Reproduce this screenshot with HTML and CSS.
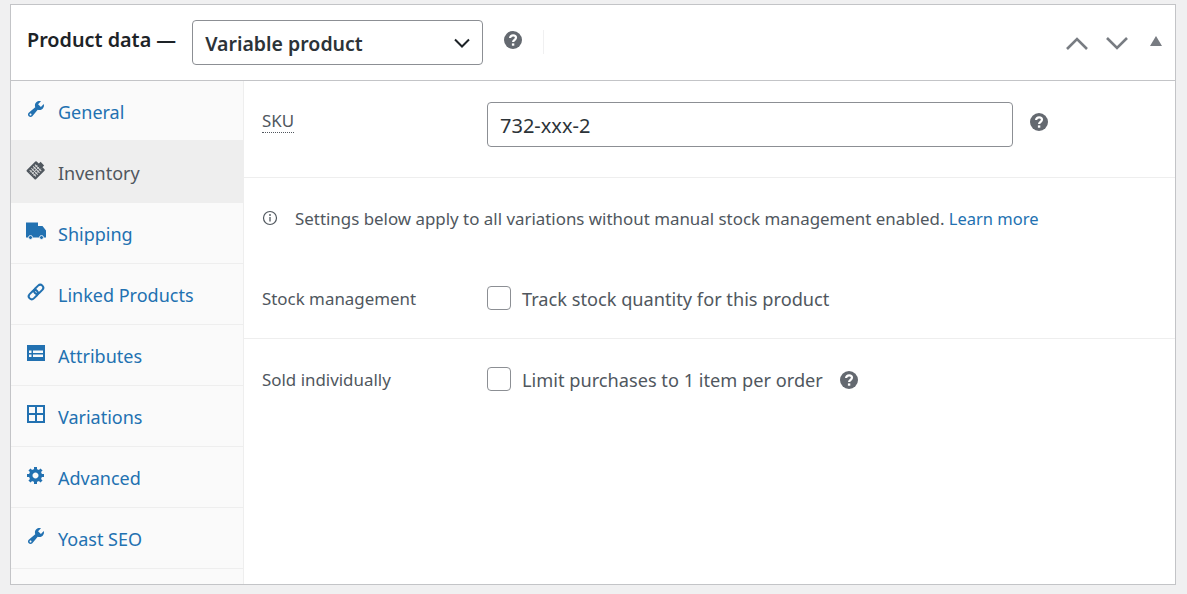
FILE: index.html
```html
<!DOCTYPE html>
<html lang="en">
<head>
    <meta charset="UTF-8">
    <title>Product data</title>
    <link rel="stylesheet" href="styles.css">
</head>
<body>

    <div class="postbox">
        <div class="postbox-header">
            <span class="postbox-title">Product data —</span>
            <div class="type-select">
                <span class="type-value">Variable product</span>
                <svg class="select-arrow" viewBox="0 0 16 10"><path d="M1 1.500l7 7 7-7" fill="none" stroke="#1d2327" stroke-width="2"/></svg>
            </div>
            <svg class="help help-header" viewBox="0 0 18 18"><use href="#help-icon"/></svg>
            <span class="header-sep"></span>
            <div class="handle-actions">
                <svg class="handle" viewBox="0 0 22 13"><path d="M1 12l10-10 10 10" fill="none" stroke="#787c82" stroke-width="2.600"/></svg>
                <svg class="handle handle-down" viewBox="0 0 22 13"><path d="M1 1l10 10 10-10" fill="none" stroke="#787c82" stroke-width="2.600"/></svg>
                <svg class="handle-toggle" viewBox="0 0 12 10"><path d="M6 0l6 10H0z" fill="#787c82"/></svg>
            </div>
        </div>

        <div class="panel-wrap">
            <ul class="tabs">
                <li class="tab">
                    <svg class="tab-icon" viewBox="0 0 20 20"><use href="#wrench-icon"/></svg>
                    General
                </li>
                <li class="tab active">
                    <svg class="tab-icon" viewBox="0 0 20 20">
                        <g transform="rotate(45 10 10)">
                            <rect x="3.500" y="3.500" width="13" height="14" rx="1" fill="#50575e"/>
                            <rect x="7.500" y="1" width="5" height="3.500" fill="#50575e"/>
                            <path d="M5.500 7h9M5.500 9.500h9M5.500 12h9M5.500 14.500h9" stroke="#ddd" stroke-width="1"/>
                            <path d="M7.500 5.500v10.500M10 5.500v10.500M12.500 5.500v10.500" stroke="#ddd" stroke-width=".7"/>
                        </g>
                    </svg>
                    Inventory
                </li>
                <li class="tab">
                    <svg class="tab-icon" viewBox="0 0 20 20">
                        <path d="M0 1.500h12v3.500h4.500l3.500 4.500v7H0z" fill="#2271b1"/>
                        <circle cx="4.500" cy="16.500" r="2" fill="#2271b1" stroke="#fafafa" stroke-width=".8"/>
                        <circle cx="15.500" cy="16.500" r="2" fill="#2271b1" stroke="#fafafa" stroke-width=".8"/>
                    </svg>
                    Shipping
                </li>
                <li class="tab">
                    <svg class="tab-icon" viewBox="0 0 20 20">
                        <g transform="rotate(-45 10 10)" fill="none" stroke="#2271b1" stroke-width="2">
                            <rect x="1" y="7" width="10.500" height="6" rx="3"/>
                            <rect x="8.500" y="7" width="10.500" height="6" rx="3"/>
                        </g>
                    </svg>
                    Linked Products
                </li>
                <li class="tab">
                    <svg class="tab-icon" viewBox="0 0 20 20">
                        <path fill-rule="evenodd" d="M1 2h18v16H1zM3 7.500v2.500h2.500V7.500zM7 7.500v2.500h10V7.500zM3 11.500v2.500h2.500v-2.500zM7 11.500v2.500h10v-2.500z" fill="#2271b1"/>
                    </svg>
                    Attributes
                </li>
                <li class="tab">
                    <svg class="tab-icon" viewBox="0 0 20 20">
                        <path d="M2 2h16v16H2zM10 2v16M2 10h16" fill="none" stroke="#2271b1" stroke-width="2"/>
                    </svg>
                    Variations
                </li>
                <li class="tab">
                    <svg class="tab-icon" viewBox="0 0 20 20"><path fill="#2271b1" d="M18 12h-2.180c-.170.700-.440 1.350-.810 1.930l1.540 1.540-2.100 2.100-1.540-1.540c-.580.360-1.230.630-1.910.790V19H8v-2.180c-.680-.160-1.330-.430-1.910-.790l-1.540 1.540-2.120-2.120 1.540-1.540c-.360-.580-.630-1.230-.790-1.910H1V9.030h2.170c.160-.700.440-1.350.800-1.940L2.430 5.550l2.100-2.100 1.540 1.540c.580-.370 1.240-.640 1.930-.810V2h3v2.180c.680.160 1.330.430 1.910.790l1.540-1.540 2.120 2.120-1.540 1.540c.360.590.640 1.240.800 1.940H18V12zm-8.500 1.500c1.660 0 3-1.340 3-3s-1.340-3-3-3-3 1.340-3 3 1.340 3 3 3z"/></svg>
                    Advanced
                </li>
                <li class="tab">
                    <svg class="tab-icon" viewBox="0 0 20 20"><use href="#wrench-icon"/></svg>
                    Yoast SEO
                </li>
            </ul>

            <div class="panel">
                <div class="field sku-field">
                    <label class="field-label"><span class="tip">SKU</span></label>
                    <div class="text-input">732-xxx-2</div>
                    <svg class="help help-sku" viewBox="0 0 18 18"><use href="#help-icon"/></svg>
                </div>

                <p class="notice">
                    <svg class="notice-icon" viewBox="0 0 16 16">
                        <circle cx="8" cy="8" r="6.500" fill="none" stroke="#50575e" stroke-width="1.200"/>
                        <path d="M8 7v4.500" stroke="#50575e" stroke-width="1.300"/>
                        <circle cx="8" cy="5" r=".9" fill="#50575e"/>
                    </svg>
                    <span>Settings below apply to all variations without manual stock management enabled. <a href="#">Learn more</a></span>
                </p>

                <div class="field stock-field">
                    <label class="field-label">Stock management</label>
                    <span class="checkbox"></span>
                    <span class="check-text">Track stock quantity for this product</span>
                </div>

                <div class="field sold-field">
                    <label class="field-label">Sold individually</label>
                    <span class="checkbox"></span>
                    <span class="check-text">Limit purchases to 1 item per order</span>
                    <svg class="help help-sold" viewBox="0 0 18 18"><use href="#help-icon"/></svg>
                </div>
            </div>
        </div>
    </div>

    <svg class="icon-defs" width="0" height="0">
        <defs>
            <g id="help-icon">
                <circle cx="9" cy="9" r="9" fill="#646970"/>
                <path d="M6.100 7c0-1.700 1.300-2.700 3-2.700s2.900 1 2.900 2.500c0 2.200-2.900 2.200-2.900 4.200" fill="none" stroke="#fff" stroke-width="2.200"/>
                <rect x="7.900" y="12.400" width="2.400" height="2.300" fill="#fff"/>
            </g>
            <path id="wrench-icon" fill="#2271b1" d="M16.680 9.770c-1.340 1.340-3.300 1.670-4.950.990l-5.410 6.520c-.990.990-2.590.990-3.580 0s-.990-2.590 0-3.570l6.520-5.420c-.680-1.650-.350-3.610.990-4.950 1.280-1.280 3.120-1.620 4.720-1.060l-2.890 2.890 2.820 2.820 2.860-2.870c.530 1.580.180 3.390-1.080 4.670zM3.810 16.210c.400.390 1.040.390 1.430 0 .400-.400.400-1.040 0-1.430-.390-.400-1.030-.400-1.430 0-.390.390-.390 1.030 0 1.430z"/>
        </defs>
    </svg>

</body>
</html>
```

FILE: styles.css
```css
body {
    margin: 0;
    background: #f0f0f1;
    font-family: "Noto Sans", sans-serif;
    font-size: 16.9px;
    color: #50575e;
}

.postbox {
    margin: 4px 11px 0 10px;
    height: 581px;
    box-sizing: border-box;
    background: #fff;
    border: 1px solid #c3c4c7;
    display: flex;
    flex-direction: column;
}

.postbox-header {
    height: 75px;
    flex-shrink: 0;
    display: flex;
    align-items: center;
    padding-left: 16px;
    border-bottom: 1px solid #c3c4c7;
}

.postbox-title {
    font-size: 19.8px;
    font-weight: 600;
    color: #1d2327;
    margin-right: 16px;
    margin-top: -6px;
}

.type-select {
    width: 291px;
    height: 45px;
    box-sizing: border-box;
    border: 1px solid #8c8f94;
    border-radius: 4px;
    padding: 0 12px;
    display: flex;
    align-items: center;
    justify-content: space-between;
    font-size: 19.5px;
    font-weight: 600;
    color: #2c3338;
}

.type-value {
    margin-top: 2px;
}

.select-arrow {
    width: 16px;
    height: 10px;
}

.help {
    width: 18px;
    height: 18px;
    flex-shrink: 0;
}

.help-header {
    margin-left: 21px;
    margin-top: -6px;
}

.header-sep {
    width: 1px;
    height: 24px;
    background: #f0f0f1;
    margin-left: 21px;
    margin-top: -2px;
}

.handle-actions {
    margin-left: auto;
    display: flex;
    align-items: center;
    padding-right: 13px;
    margin-top: 2px;
}

.handle {
    width: 22px;
    height: 13px;
    margin-right: 18px;
}

.handle-down {
    margin-right: 22px;
}

.handle-toggle {
    width: 12px;
    height: 10px;
    margin-top: -5px;
}

.panel-wrap {
    flex: 1;
    display: flex;
}

.tabs {
    width: 233px;
    box-sizing: border-box;
    flex-shrink: 0;
    margin: 0;
    padding: 0;
    list-style: none;
    background: #fafafa;
    border-right: 1px solid #eee;
}

.tab {
    height: 58px;
    padding-top: 2px;
    border-bottom: 1px solid #eee;
    padding-left: 15px;
    display: flex;
    align-items: center;
    color: #2271b1;
    font-size: 18px;
}

.tab:first-child {
    height: 57px;
}

.tab.active {
    height: 60px;
    margin-right: -1px;
    background: #eee;
    color: #50575e;
    border-bottom: none;
}

.tab-icon {
    width: 20px;
    height: 20px;
    margin-right: 12px;
    margin-top: -7px;
    flex-shrink: 0;
}

.tab:first-child .tab-icon {
    margin-top: -5px;
}

.panel {
    flex: 1;
}

.field {
    display: flex;
    align-items: center;
    padding-left: 18px;
}

.field-label {
    width: 225px;
    flex-shrink: 0;
}

.sku-field {
    height: 96px;
    border-bottom: 1px solid #eee;
}

.sku-field .field-label {
    margin-top: -18px;
}

.tip {
    border-bottom: 1px dotted #50575e;
}

.text-input {
    width: 526px;
    height: 45px;
    box-sizing: border-box;
    border: 1px solid #8c8f94;
    border-radius: 4px;
    padding: 2px 12px 0;
    display: flex;
    align-items: center;
    font-size: 20px;
    color: #2c3338;
    margin-top: -10px;
}

.help-sku {
    margin-left: 17px;
    margin-top: -14px;
}

.notice {
    margin: 0;
    height: 82px;
    padding: 0 0 2px 18px;
    box-sizing: border-box;
    display: flex;
    align-items: center;
    color: #50575e;
}

.notice-icon {
    width: 16px;
    height: 16px;
    margin-right: 17px;
}

.notice a {
    color: #2271b1;
    font-size: 16.5px;
    text-decoration: none;
}

.stock-field {
    height: 76px;
    padding-bottom: 2px;
    border-bottom: 1px solid #eee;
}

.sold-field {
    height: 80px;
    padding-bottom: 3px;
}

.checkbox {
    width: 24px;
    height: 24px;
    box-sizing: border-box;
    border: 1px solid #8c8f94;
    border-radius: 4px;
    margin-right: 11px;
    flex-shrink: 0;
}

.check-text {
    font-size: 18.2px;
    margin-top: 2px;
}

.help-sold {
    margin-left: 17px;
    margin-top: 2px;
}

.icon-defs {
    position: absolute;
}
```
